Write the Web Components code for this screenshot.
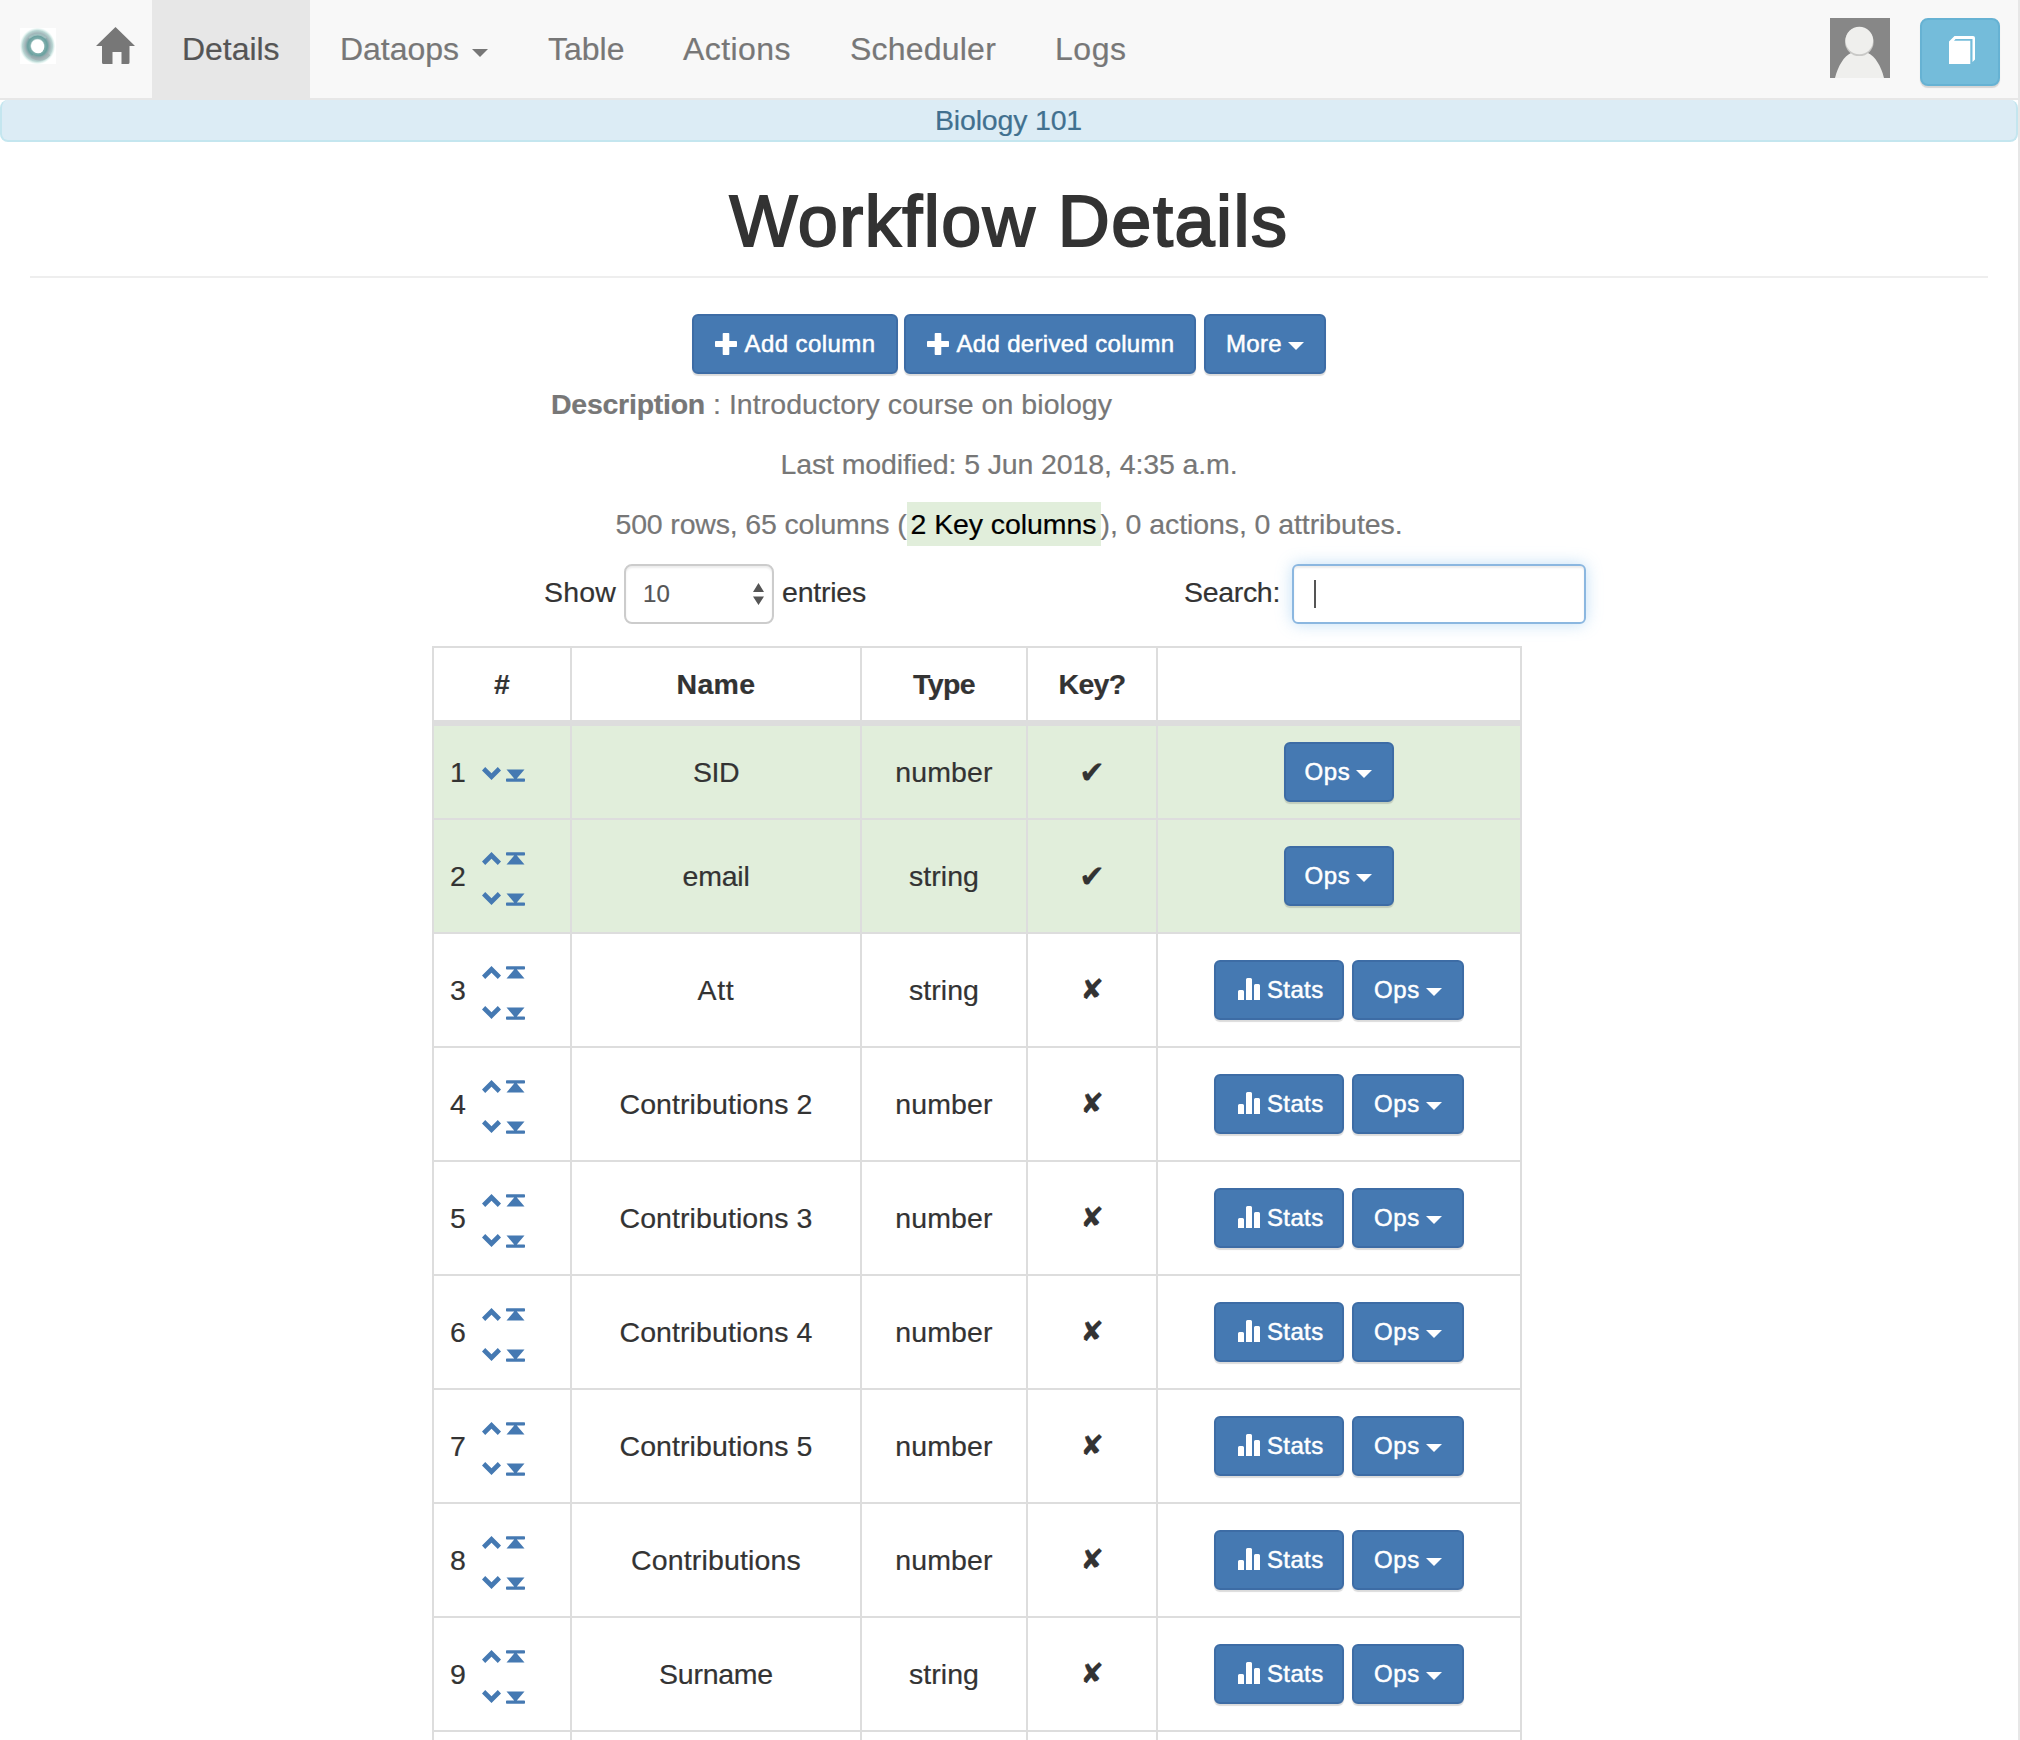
<!DOCTYPE html>
<html lang="en">
<head>
<meta charset="utf-8">
<title>Workflow Details</title>
<style>
html,body{margin:0;padding:0;background:#fff;overflow:hidden;height:1740px}
body{font-family:"Liberation Sans",Arial,sans-serif;font-size:28.500px;color:#333;-webkit-text-stroke:.2px currentColor}
</style>
</head>
<body>
<workflow-page></workflow-page>
<script>
const define = (name, html, init) => customElements.define(name, class extends HTMLElement {
  connectedCallback() {
    if (this.shadowRoot) return;
    const root = this.attachShadow({ mode: 'open' });
    root.innerHTML = typeof html === 'function' ? html(this) : html;
    if (init) init(this, root);
  }
});

/* Text tracked so that its advance equals the "w" attribute. */
define('fit-text', '<style>:host{display:inline-block;white-space:pre}span{display:inline-block}</style><span><slot></slot></span>', (el, root) => {
  const w = parseFloat(el.getAttribute('w'));
  if (!w) return;
  const span = root.querySelector('span');
  requestAnimationFrame(() => {
    const n = el.textContent.length;
    const natural = span.getBoundingClientRect().width;
    el.style.letterSpacing = ((w - natural) / n) + 'px';
  });
});

const shapes = {
  plus: [22, 22, '<path d="M8.500 0h5q.8 0 .8.8v7.200h6.900q.8 0 .8.8v4.500q0 .8-.8.8h-6.900v7.100q0 .8-.8.8h-5q-.8 0-.8-.8v-7.100H.8q-.8 0-.8-.8V8.800Q0 8 .8 8h6.900V.8q0-.8.8-.8z"/>'],
  stats: [22, 22, '<path d="M0 22v-8.500q0-1.500 1.500-1.500h3q1.500 0 1.500 1.500V22zM8 22V1.500Q8 0 9.500 0h3Q14 0 14 1.500V22zM16 22V7.500Q16 6 17.500 6h3Q22 6 22 7.500V22z"/>'],
  down: [19, 13, '<path d="M0 3.400 3.200 0 9.500 6.200 15.800 0 19 3.400 9.500 12.900z"/>'],
  up: [19, 13, '<path d="M0 9.500 9.500 0 19 9.500 15.800 12.900 9.500 6.700 3.200 12.900z"/>'],
  bottom: [19, 13, '<path d="M.5 .4h18L10.800 9.400h7.400q.8 0 .8.8v1.800q0 .8-.8.8H.8q-.8 0-.8-.8v-1.800q0-.8.8-.8h7.400z"/>'],
  top: [19, 13, '<path d="M.5 12.600h18L10.800 3.600h7.400q.8 0 .8-.8V1q0-.8-.8-.8H.8Q0 .2 0 1v1.800q0 .8.8.8h7.400z"/>'],
  caret: [16, 8, '<path d="M0 0h16L8 8z"/>'],
  home: [39, 37, '<path d="M19.500 0 39 19h-5.500v16.500q0 1.500-1.500 1.500h-6.500V25h-9v12H7.500Q6 37 6 35.500V19H0z"/>'],
  book: [26, 28, '<path d="M0 5.500 5.500 0H24q2 0 2 2v21.500L23.500 26V3H6.500L5 4.800h16.300V28H0z"/>'],
  sort: [11, 22, '<path d="M5.500 0 11 9H0zM0 13.500h11L5.500 22z"/>']
};
define('ui-icon', el => {
  const [w, h, body] = shapes[el.getAttribute('name')];
  return `<style>:host{display:inline-block;flex:none;width:${w}px;height:${h}px}svg{display:block}</style>
  <svg width="${w}" height="${h}" viewBox="0 0 ${w} ${h}" fill="currentColor">${body}</svg>`;
});

define('ui-button', el => `<style>
:host{display:flex;flex:none;box-sizing:border-box;align-items:center;height:60px;width:${el.getAttribute('width')}px;padding:0 0 0 ${el.getAttribute('inset') || 20}px;
 background:#4579b2;border:2px solid #3d6ca5;border-radius:6px;color:#fff;font-size:24px;line-height:56px;white-space:nowrap;
 box-shadow:0 2px 1px rgba(0,0,0,.14);-webkit-text-stroke:.5px #fff}
::slotted(ui-icon[name=plus]){margin-right:7.500px}
::slotted(ui-icon[name=stats]){margin:-2px 7px 0 2px}
::slotted(ui-icon[name=caret]){margin:4px 0 0 5.500px}
</style><slot></slot>`);

define('nav-item', el => `<style>
:host{display:flex;flex:none;align-items:center;box-sizing:border-box;height:98px;width:${el.getAttribute('width')}px;padding-left:30px;
 font-size:32px;line-height:98px;color:#777;white-space:nowrap}
:host([active]){background:#e7e7e7;color:#555}
::slotted(ui-icon){margin:7px 0 0 13px}
</style><slot></slot>`);

define('site-logo', `<style>:host{display:block;width:36px;height:36px;background:#fff}svg{display:block}</style>
<svg width="36" height="36" viewBox="0 0 36 36">
<defs><radialGradient id="g"><stop offset=".34" stop-color="#fff"/><stop offset=".42" stop-color="#7faeac"/><stop offset=".56" stop-color="#69a09f"/><stop offset=".7" stop-color="#a0b3b7"/><stop offset=".86" stop-color="#b9d6d3"/><stop offset="1" stop-color="#dff5f0" stop-opacity=".3"/></radialGradient></defs>
<ellipse cx="17.500" cy="18" rx="17.500" ry="18" fill="url(#g)"/>
<path d="M9 10Q18 3 26 10" fill="none" stroke="#a9c7c6" stroke-width="2" opacity=".7"/>
<path d="M12 28Q22 34 29 26" fill="none" stroke="#9ba7ac" stroke-width="4" opacity=".5"/>
<ellipse cx="18.300" cy="19" rx="5.800" ry="6.300" fill="#fff"/></svg>`);

define('user-avatar', `<style>:host{display:block;width:60px;height:60px}svg{display:block}</style>
<svg width="60" height="60" viewBox="0 0 60 60"><path d="M0 0h60v60H0z" fill="#878787"/>
<path d="M5 60C8 48 14 38 21 35h17c7 3 13 13 16 25z" fill="#efefed"/>
<circle cx="29.300" cy="23.800" r="14.300" fill="#c9c9c7"/><circle cx="29.300" cy="22.500" r="13.800" fill="#efefed"/></svg>`);

define('docs-button', `<style>:host{display:flex;box-sizing:border-box;width:80px;height:68px;align-items:center;justify-content:center;
background:#74bcda;border:2px solid #66b2d3;border-radius:8px;color:#fff;box-shadow:0 2px 1px rgba(0,0,0,.14)}
ui-icon{margin:-4px 0 0 3px}</style><ui-icon name="book"></ui-icon>`);

define('top-nav', `<style>
:host{display:flex;box-sizing:border-box;height:100px;background:#f8f8f8;border-bottom:2px solid #e7e7e7}
site-logo{margin:28px 0 0 20px}
.home{color:#777;margin:27px 17px 0 40px}
.right{display:flex;margin:18px 18px 0 auto;gap:30px}
</style>
<site-logo></site-logo><ui-icon class="home" name="home"></ui-icon>
<nav-item width="158" active><fit-text w="97.500">Details</fit-text></nav-item>
<nav-item width="208"><fit-text w="119">Dataops</fit-text><ui-icon name="caret"></ui-icon></nav-item>
<nav-item width="135"><fit-text w="76.500">Table</fit-text></nav-item>
<nav-item width="167"><fit-text w="108">Actions</fit-text></nav-item>
<nav-item width="205"><fit-text w="146">Scheduler</fit-text></nav-item>
<nav-item width="130"><fit-text w="71.500">Logs</fit-text></nav-item>
<div class="right"><user-avatar></user-avatar><docs-button></docs-button></div>`);

define('course-banner', `<style>:host{display:block;box-sizing:border-box;height:42px;line-height:40px;text-align:center;padding-right:1px;
background:#dcecf5;border:2px solid #c4e6ef;border-top:0;border-radius:8px;color:#41708f}</style><slot></slot>`);

define('page-title', `<style>:host{display:block;margin:39px 30px 0;height:95px;line-height:80px;font-size:72px;text-align:center;
border-bottom:2px solid #eee;-webkit-text-stroke:2px #333}</style><slot></slot>`);

define('workflow-summary', `<style>
:host{display:flex;flex-direction:column;gap:20px;margin-top:10px;color:#777;line-height:40px}
div{height:40px;display:flex;justify-content:center;white-space:pre}
.desc{justify-content:flex-start;padding-left:551px}
mark{background:#e1eedb;color:#000;height:44px;line-height:44px;margin:-2px 0;width:194px;text-align:center}
</style>
<div class="desc"><b><fit-text w="154">Description</fit-text></b><fit-text w="407"> : Introductory course on biology</fit-text></div>
<div><fit-text w="457">Last modified: 5 Jun 2018, 4:35 a.m.</fit-text></div>
<div><fit-text w="291">500 rows, 65 columns (</fit-text><mark><fit-text w="186">2 Key columns</fit-text></mark><fit-text w="302">), 0 actions, 0 attributes.</fit-text></div>`);

define('table-controls', `<style>
:host{display:flex;box-sizing:border-box;align-items:center;width:1586px;height:60px;margin-top:20px;padding-left:544px;line-height:56px}
.select,.search{box-sizing:border-box;height:60px;border:2px solid #ccc;border-radius:8px;display:flex;align-items:center;box-shadow:inset 0 2px 2px rgba(0,0,0,.075)}
.select{width:150px;margin:0 8px;padding:0 8px 0 17px;justify-content:space-between;font-size:24px;color:#555}
.search{width:294px;margin-left:12px;padding-left:20px;border-radius:6px;border-color:#8bb7e0;box-shadow:inset 0 2px 2px rgba(0,0,0,.075),0 0 16px rgba(102,175,233,.4)}
.search i{display:block;width:2px;height:28px;background:#555}
.lbl{margin-left:auto}
.t{padding-bottom:4px}
</style>
<fit-text class="t" w="72">Show</fit-text><div class="select"><fit-text w="27">10</fit-text><ui-icon name="sort"></ui-icon></div><fit-text class="t" w="84">entries</fit-text>
<fit-text class="lbl t" w="96">Search:</fit-text><div class="search"><i></i></div>`);

define('table-head', `<style>
:host{display:grid;grid-template-columns:138px 290px 166px 130px 364px;height:72px;line-height:72px;font-weight:bold;text-align:center;border:2px solid #ddd;border-width:2px 0 6px 2px}
div{border-right:2px solid #ddd}
</style><div>#</div><div><fit-text w="79">Name</fit-text></div><div><fit-text w="62">Type</fit-text></div><div><fit-text w="67">Key?</fit-text></div><div></div>`);

const widths = {'SID':46,'email':67,'Att':37,'Surname':114,'Contributions':170,'number':97.5,'string':70};
define('column-row', el => {
  const [n, name, type] = ['n', 'name', 'type'].map(a => el.getAttribute(a));
  const key = el.hasAttribute('key'), first = n === '1';
  return `<style>
:host{display:grid;grid-template-columns:138px 290px 166px 130px 364px;height:${first ? 92 : 112}px;border:2px solid #ddd;border-width:0 0 2px 2px}
:host([key]){background:#e1eedb}
div.c{border-right:2px solid #ddd;display:flex;align-items:center;justify-content:center;line-height:60px}
div.num{justify-content:flex-start;padding-left:16px}
.moves{display:grid;grid-template-columns:19px 19px;column-gap:5px;row-gap:27px;color:#4579b2;margin:${first ? '3px' : '4px'} 0 0 16px}
.moves .b{margin-top:1.500px;margin-bottom:-1.500px}
.mark{font-family:"DejaVu Sans",sans-serif;font-size:${key ? 31 : 28}px}
.acts{gap:8px}
</style>
<div class="c num"><span>${n}</span><span class="moves">${first ? '' : '<ui-icon name="up"></ui-icon><ui-icon name="top"></ui-icon>'}<ui-icon name="down"></ui-icon><ui-icon class="b" name="bottom"></ui-icon></span></div>
<div class="c"><fit-text w="${widths[name] || 193}">${name}</fit-text></div>
<div class="c"><fit-text w="${widths[type]}">${type}</fit-text></div>
<div class="c"><span class="mark">${key ? '✔' : '✘'}</span></div>
<div class="c acts">${key ? '' : '<ui-button width="130"><ui-icon name="stats"></ui-icon><fit-text w="56.500">Stats</fit-text></ui-button>'}<ui-button width="${key ? 110 : 112}" inset="${key ? 18.5 : 20}"><fit-text w="46">Ops</fit-text><ui-icon name="caret"></ui-icon></ui-button></div>`;
});

const rows = [['SID','number',1],['email','string',1],['Att','string'],['Contributions 2','number'],['Contributions 3','number'],
 ['Contributions 4','number'],['Contributions 5','number'],['Contributions','number'],['Surname','string']];
define('column-table', `<style>:host{display:block;width:1090px;margin:22px 0 0 432px}
.next{display:grid;grid-template-columns:138px 290px 166px 130px 364px;height:8px;border-left:2px solid #ddd}.next i{border-right:2px solid #ddd}</style>
<table-head></table-head>${rows.map((r, i) => `<column-row n="${i + 1}" name="${r[0]}" type="${r[1]}"${r[2] ? ' key' : ''}></column-row>`).join('')}
<div class="next"><i></i><i></i><i></i><i></i><i></i></div>`);

define('workflow-page', `<style>
:host{display:block;box-sizing:border-box;width:2020px;height:1740px;overflow:hidden;border-right:2px solid #e7e7e7}
.actions{display:flex;margin:36px 0 0 692px}
.actions ui-button+ui-button{margin-left:6px}
.actions ui-button:last-child{margin-left:8px}
</style>
<top-nav></top-nav>
<course-banner><fit-text w="147">Biology 101</fit-text></course-banner>
<page-title><fit-text w="559">Workflow Details</fit-text></page-title>
<div class="actions">
<ui-button width="206" inset="21"><ui-icon name="plus"></ui-icon><fit-text w="131">Add column</fit-text></ui-button>
<ui-button width="292" inset="21"><ui-icon name="plus"></ui-icon><fit-text w="218">Add derived column</fit-text></ui-button>
<ui-button width="122"><fit-text w="56">More</fit-text><ui-icon name="caret"></ui-icon></ui-button>
</div>
<workflow-summary></workflow-summary>
<table-controls></table-controls>
<column-table></column-table>`);
</script>
</body>
</html>
